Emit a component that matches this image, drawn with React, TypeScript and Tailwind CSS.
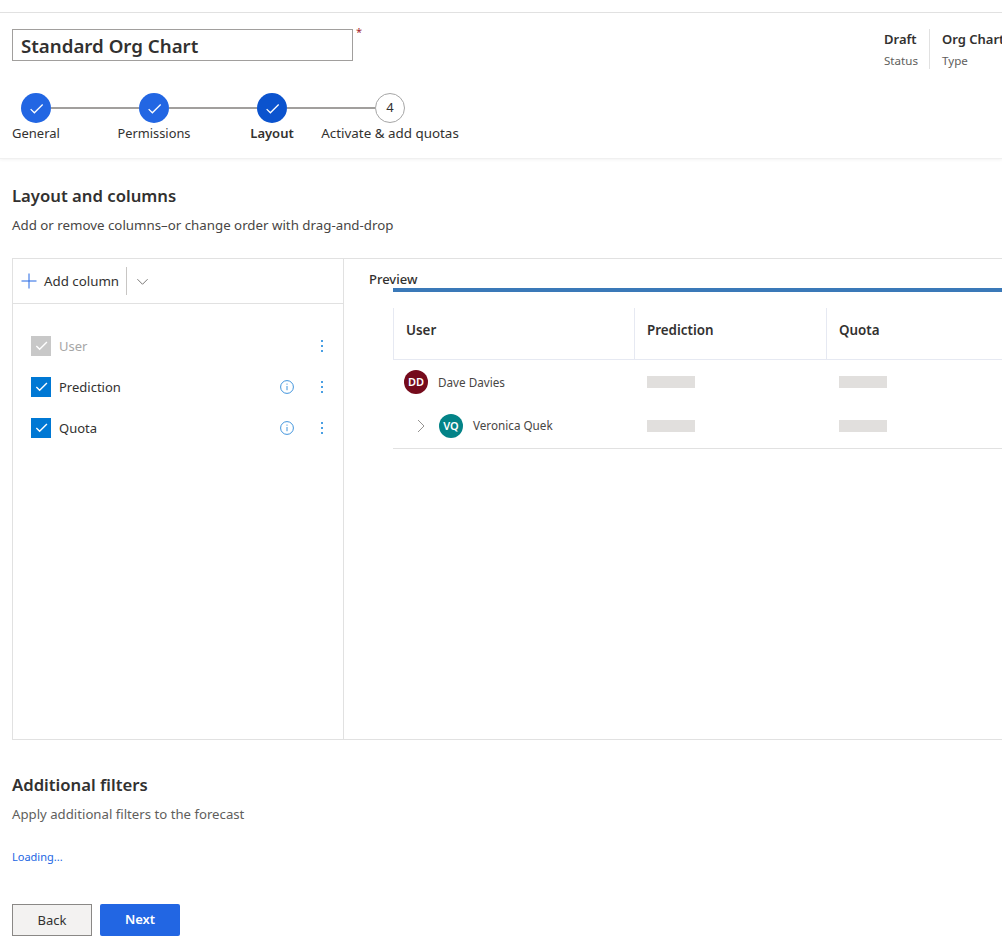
import React from "react";

const font = "font-['Noto_Sans','Open_Sans',sans-serif]";

function Check({ className = "", w = "1.1" }: { className?: string; w?: string }) {
  return (
    <svg viewBox="0 0 16 16" fill="none" className={className} stroke="currentColor" strokeWidth={w}>
      <path d="M2.5 8.6 6 12 13.8 4.2" />
    </svg>
  );
}

function Step({ dark, n }: { dark?: boolean; n?: string }) {
  if (n)
    return (
      <div className="w-[30px] h-[30px] rounded-full bg-white border border-[#a6a6a6] flex items-center justify-center text-[13px] text-[#323130]">
        {n}
      </div>
    );
  return (
    <div className={`w-[30px] h-[30px] rounded-full flex items-center justify-center text-white ${dark ? "bg-[#0b53ce]" : "bg-[#2266e3]"}`}>
      <Check className="w-[17px] h-[17px]" w="1.2" />
    </div>
  );
}

function Dots() {
  return (
    <svg viewBox="0 0 4 12" className="w-[4px] h-[12px] text-[#4a9fe3]" fill="currentColor">
      <rect x="1" y="0" width="2" height="2" />
      <rect x="1" y="5" width="2" height="2" />
      <rect x="1" y="10" width="2" height="2" />
    </svg>
  );
}

function Info() {
  return (
    <svg viewBox="0 0 14 14" className="w-[14px] h-[14px] text-[#2b88d8]" fill="none" stroke="currentColor" strokeWidth="0.9">
      <circle cx="7" cy="7" r="6.4" />
      <path d="M7 6v4.2" />
      <path d="M7 3.6v1.1" />
    </svg>
  );
}

function ColumnRow({ label, disabled, info }: { label: string; disabled?: boolean; info?: boolean }) {
  return (
    <div className="h-[41px] flex items-center pl-[18px] pr-[19px]">
      <div className={`w-[20px] h-[20px] flex items-center justify-center text-white ${disabled ? "bg-[#c8c8c8]" : "bg-[#0078d4]"}`}>
        <Check className="w-[15px] h-[15px]" w="1.5" />
      </div>
      <span className={`ml-[8px] text-[13px] leading-[20px] ${disabled ? "text-[#a6a6a6]" : "text-[#323130]"}`}>{label}</span>
      <div className="ml-auto flex items-center">
        {info && <Info />}
        <div className="ml-[26px] w-[4px] flex"><Dots /></div>
      </div>
    </div>
  );
}

function Avatar({ text, color }: { text: string; color: string }) {
  return (
    <div className={`w-[24px] h-[24px] rounded-full text-white text-[11px] font-semibold flex items-center justify-center ${color}`}>
      {text}
    </div>
  );
}

function Bar() {
  return <div className="w-[48px] h-[12px] bg-[#e1dfdd]" />;
}

export default function App() {
  return (
    <div className={`${font} w-[1002px] h-[945px] overflow-hidden bg-white text-[#323130] flex flex-col`}>
      <div className="h-[159px] pt-[12px] shrink-0 border-b border-[#f0f0f0] shadow-[0_1px_3px_rgba(0,0,0,0.05)]">
        <div className="h-[1px] bg-[#e1e1e1]" />
        <div className="flex justify-between pl-[12px] pt-[16px]">
          <div className="flex items-start">
            <div className="w-[341px] h-[32px] border border-[#a19f9d] pl-[8px] pt-[2px] flex items-center text-[18.7px] font-semibold text-[#323130] leading-none">
              Standard Org Chart
            </div>
            <span className="ml-[3px] -mt-[5px] text-[11px] text-[#a4262c] leading-[16px]">*</span>
          </div>
          <div className="flex w-[118px] shrink-0 overflow-hidden h-[40px]">
            <div className="w-[46px] shrink-0 border-r border-[#e1e1e1]">
              <div className="text-[13px] font-semibold leading-[20px]">Draft</div>
              <div className="text-[11.6px] text-[#605e5c] leading-[18px] mt-[3px]">Status</div>
            </div>
            <div className="pl-[12px] shrink-0">
              <div className="text-[13px] font-semibold leading-[20px] whitespace-nowrap">Org Chart</div>
              <div className="text-[11.6px] text-[#605e5c] leading-[18px] mt-[3px]">Type</div>
            </div>
          </div>
        </div>
        <div className="flex items-center ml-[21px] mt-[24px]">
          <Step />
          <div className="w-[88px] h-[2px] bg-[#a19f9d]" />
          <Step />
          <div className="w-[88px] h-[2px] bg-[#a19f9d]" />
          <Step dark />
          <div className="w-[88px] h-[2px] bg-[#a19f9d]" />
          <Step n="4" />
        </div>
        <div className="flex ml-[-23px] mt-[1px] text-[13px] leading-[18px]">
          <div className="w-[118px] text-center">General</div>
          <div className="w-[118px] text-center text-[12.8px]">Permissions</div>
          <div className="w-[118px] text-center font-semibold">Layout</div>
          <div className="w-[118px] text-center whitespace-nowrap flex justify-center text-[13.4px]">Activate &amp; add quotas</div>
        </div>
      </div>

      <div className="pl-[12px] pt-[25px]">
        <h2 className="text-[16.7px] font-semibold leading-[24px]">Layout and columns</h2>
        <p className="text-[13.3px] text-[#484644] leading-[20px] mt-[7px]">Add or remove columns–or change order with drag-and-drop</p>

        <div className="mt-[23px] h-[482px] w-[1000px] border border-[#e1e1e1] flex">
          <div className="w-[331px] shrink-0 border-r border-[#e1e1e1]">
            <div className="h-[45px] border-b border-[#e1e1e1] flex items-center pl-[8px]">
              <svg viewBox="0 0 16 16" className="w-[16px] h-[16px] text-[#2266e3]" fill="none" stroke="currentColor" strokeWidth="1">
                <path d="M8 .5v15M.5 8h15" />
              </svg>
              <span className="ml-[7px] text-[13.3px] leading-[18px] text-[#323130]">Add column</span>
              <div className="ml-[7px] w-[1px] h-[28px] bg-[#c8c6c4]" />
              <svg viewBox="0 0 14 14" className="ml-[9px] w-[13px] h-[13px] text-[#605e5c]" fill="none" stroke="currentColor" strokeWidth="0.9">
                <path d="M1.5 4.5 7 10l5.5-5.5" />
              </svg>
            </div>
            <div className="pt-[21px]">
              <ColumnRow label="User" disabled />
              <ColumnRow label="Prediction" info />
              <ColumnRow label="Quota" info />
            </div>
          </div>
          <div className="flex-1 pl-[25px] pt-[11px]">
            <div className="text-[13px] font-medium leading-[18px] text-[#323130]">Preview</div>
            <div className="ml-[24px] h-[4px] bg-[#3a79b8]" />
            <div className="ml-[24px] mt-[16px]">
              <div className="h-[52px] border-b border-[#e6e9f2] flex text-[13.4px] font-semibold">
                <div className="w-[242px] pl-[12px] pb-[6px] border-l border-r border-[#e6e9f2] flex items-center">User</div>
                <div className="w-[192px] pl-[12px] pb-[6px] border-r border-[#e6e9f2] flex items-center">Prediction</div>
                <div className="flex-1 pl-[12px] pb-[6px] flex items-center">Quota</div>
              </div>
              <div className="border-b border-[#e1e1e1] h-[89px]">
                <div className="h-[44px] flex items-center">
                  <div className="w-[242px] pl-[11px] flex items-center">
                    <Avatar text="DD" color="bg-[#750b1c]" />
                    <span className="ml-[10px] leading-[18px] text-[11.7px] text-[#484644]">Dave Davies</span>
                  </div>
                  <div className="w-[192px] pl-[12px]"><Bar /></div>
                  <div className="pl-[12px]"><Bar /></div>
                </div>
                <div className="h-[44px] flex items-center">
                  <div className="w-[242px] pl-[23px] flex items-center">
                    <svg viewBox="0 0 10 14" className="w-[10px] h-[14px] text-[#8a8886]" fill="none" stroke="currentColor" strokeWidth="0.9">
                      <path d="M2 1l6 6-6 6" />
                    </svg>
                    <div className="ml-[13px]"><Avatar text="VQ" color="bg-[#038387]" /></div>
                    <span className="ml-[10px] text-[11.7px] text-[#484644]">Veronica Quek</span>
                  </div>
                  <div className="w-[192px] pl-[12px]"><Bar /></div>
                  <div className="pl-[12px]"><Bar /></div>
                </div>
              </div>
            </div>
          </div>
        </div>

        <h2 className="text-[16.7px] font-semibold leading-[24px] mt-[33px]">Additional filters</h2>
        <p className="text-[13.2px] text-[#605e5c] leading-[20px] mt-[7px]">Apply additional filters to the forecast</p>
        <p className="text-[11px] text-[#2266e3] leading-[16px] mt-[25px]">Loading...</p>

        <div className="flex gap-[8px] mt-[39px]">
          <button className="w-[80px] h-[32px] bg-[#f3f2f1] border border-[#8a8886] text-[13px] leading-[18px] font-normal text-[#323130]">Back</button>
          <button className="w-[80px] h-[32px] bg-[#2266e3] rounded-[2px] text-[13px] font-semibold text-white">Next</button>
        </div>
      </div>
    </div>
  );
}
